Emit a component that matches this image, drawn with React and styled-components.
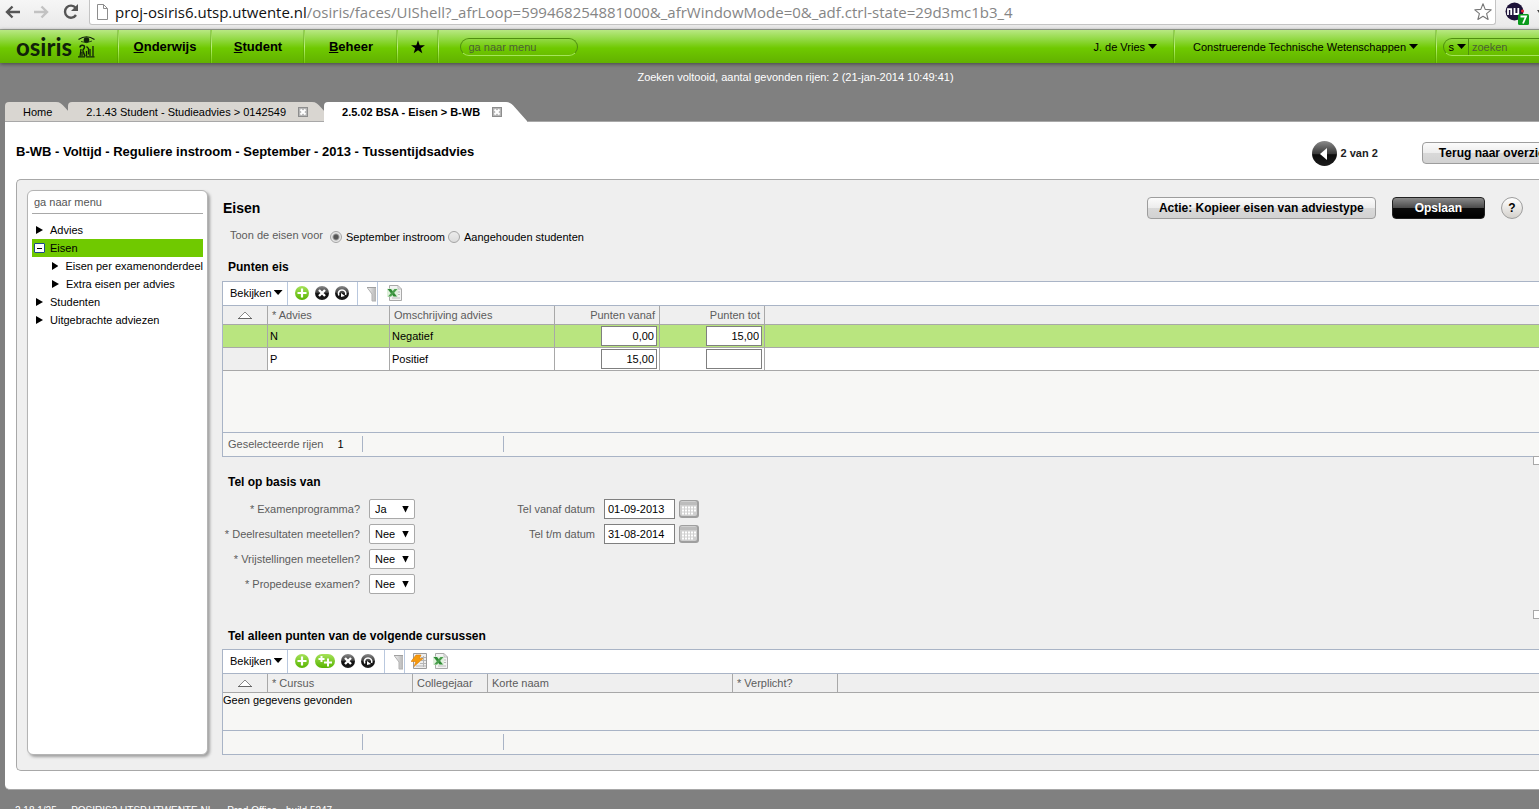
import React from "react";
import styled, { createGlobalStyle, css } from "styled-components";

const GlobalStyle = createGlobalStyle`
  *, *::before, *::after { box-sizing: border-box; }
  body {
    margin: 0;
    overflow: hidden;
    background: #808080;
    color: #000;
    font: 11px/18px "Liberation Sans", Arial, sans-serif;
  }
  button, input, select { font: inherit; color: inherit; }
  button { cursor: pointer; }
  h1, h2, h3, ul { margin: 0; padding: 0; }
`;

const line = "#a9b4c6";
const grey = "#a8a8a8";

/* ---------- browser bar ---------- */

const BrowserBar = styled.header`
  display: flex;
  align-items: flex-start;
  height: 30px;
  padding-left: 4px;
  background: linear-gradient(#f6f6f6, #e9e9e9);
  border-bottom: 1px solid #a2aa9c;
`;

const BrowserButton = styled.button`
  width: 29px;
  height: 24px;
  padding: 0;
  border: 0;
  background: none;
  text-align: left;
  svg { display: block; }
`;

const AddressBar = styled.div`
  display: flex;
  align-items: center;
  flex: 1;
  height: 25px;
  margin-left: -2px;
  margin-right: 9px;
  padding: 0 3px 0 7px;
  background: #fff;
  border: 1px solid #c4c4c4;
  border-top: 0;
  border-radius: 0 0 3px 3px;
`;

const Address = styled.div`
  flex: 1;
  padding-left: 7px;
  color: #858585;
  font: 15px/24px "Open Sans", "Noto Sans", sans-serif;
  white-space: nowrap;
  b { color: #111; font-weight: 400; }
`;

const Extension = styled.div`
  width: 34px;
  svg { display: block; }
`;

/* ---------- page and main navigation ---------- */

const Shell = styled.div`
  height: 100vh;
  overflow: hidden;
`;

const Page = styled.div`
  width: calc(100% + 52px);
`;

const NavBar = styled.nav`
  display: flex;
  height: 33px;
  background: linear-gradient(#b8e883 0, #8fd83f 30%, #6fc900 55%, #62b100 100%);
  box-shadow: 0 1px 4px #444;
`;

const Logo = styled.a`
  display: flex;
  align-items: center;
  gap: 6px;
  width: 118px;
  padding-left: 16px;
  color: #10220a;
  text-decoration: none;
  font: 700 24px/30px Lato, "Open Sans", sans-serif;
`;

const NavCell = styled.div`
  display: flex;
  align-items: center;
  justify-content: center;
  width: ${(p) => p.$width}px;
  border-left: 1px solid;
  border-image: linear-gradient(#8ccf45, #b9ee7c 50%, #6fc900) 1;
  box-shadow: -1px 0 0 rgba(60, 120, 0, 0.25);
`;

const NavLink = styled.a`
  color: #000;
  text-decoration: none;
  font-size: 13px;
  font-weight: 700;
  svg { display: block; }
`;

const NavDrop = styled.button`
  display: flex;
  align-items: center;
  gap: 3px;
  padding: 0;
  border: 0;
  background: none;
  white-space: nowrap;
`;

const UserMenu = styled.div`
  display: flex;
  margin-left: auto;
  padding-right: 17px;
`;

const Caret = styled.i`
  width: 9px;
  height: 5px;
  background: currentColor;
  clip-path: polygon(0 0, 100% 0, 50% 100%);
`;

const Pill = styled.div`
  display: flex;
  align-items: center;
  width: ${(p) => p.$width}px;
  height: 18px;
  overflow: hidden;
  border: 1px solid #4f8f10;
  border-bottom-color: #a5e45c;
  border-radius: 9px;
`;

const PillInput = styled.input`
  flex: 1;
  min-width: 0;
  height: 16px;
  padding: 0 ${(p) => p.$pad}px;
  border: 0;
  background: none;
  outline: 0;
  &::placeholder { color: #4c5f38; opacity: 1; }
`;

const PillDrop = styled.button`
  display: flex;
  align-items: center;
  gap: 3px;
  height: 16px;
  padding: 0 2px 0 5px;
  border: 0;
  border-right: 1px solid #4f8f10;
  background: none;
`;

const Message = styled.p`
  margin: 0;
  padding: 5px 0 0;
  height: 39px;
  color: #fff;
  text-align: center;
`;

/* ---------- tabs ---------- */

const TabRow = styled.ul`
  display: flex;
  position: relative;
  z-index: 1;
  margin: 0 0 -1px 5px;
  list-style: none;
`;

const TabItem = styled.li`
  display: flex;
  height: 20px;
  margin-right: -9px;
  color: ${(p) => (p.$active ? "#fff" : "#d9d6d1")};
  svg { display: block; }
`;

const TabBody = styled.div`
  display: flex;
  align-items: center;
  gap: 12px;
  padding: 0 4px 0 18px;
  border-radius: 4px 0 0 0;
  background: currentColor;
  ${(p) => !p.$active && css`box-shadow: inset 0 -1px ${grey};`}
  a { color: #000; text-decoration: none; font-weight: ${(p) => (p.$active ? 700 : 400)}; white-space: nowrap; }
`;

const CloseButton = styled.button`
  width: 10px;
  height: 10px;
  padding: 0;
  border: 0;
  background: none;
  svg { display: block; }
`;

/* ---------- content ---------- */

const Sheet = styled.main`
  margin-left: 5px;
  padding: 19px 0 18px 11px;
  background: #fff;
  border-top: 1px solid ${grey};
  border-bottom: 1px solid ${grey};
  border-radius: 0 0 0 5px;
`;

const SheetHead = styled.div`
  display: flex;
  align-items: center;
  height: 24px;
  margin-bottom: 14px;
  padding-right: 18px;
`;

const SheetTitle = styled.h1`
  flex: 1;
  padding-bottom: 2px;
  font-size: 13px;
  line-height: 20px;
`;

const Pager = styled.div`
  display: flex;
  align-items: center;
  gap: 4px;
  margin-right: 44px;
  font-weight: 700;
  color: #222;
`;

const PagerButton = styled.button`
  width: 25px;
  height: 25px;
  padding: 0;
  border: 0;
  background: none;
  svg { display: block; }
`;

const Button = styled.button`
  height: 22px;
  padding: 0 ${(p) => p.$pad || 11}px;
  border: 1px solid #9d9d9d;
  border-radius: 4px;
  background: linear-gradient(#fbfbfb, #ececec 50%, #d9d9d9 50%, #d2d2d2);
  font-size: 12px;
  font-weight: 700;
  white-space: nowrap;
  ${(p) =>
    p.$dark &&
    css`
      color: #fff;
      border-color: #222;
      background: linear-gradient(#8a8a8a, #4a4a4a 50%, #0a0a0a 50%, #000);
    `}
`;

const HelpButton = styled.button`
  width: 22px;
  height: 22px;
  padding: 0;
  border: 1px solid #9d9d9d;
  border-radius: 50%;
  background: linear-gradient(#fff, #d4d1cc);
  font-size: 12px;
  font-weight: 700;
`;

const Frame = styled.div`
  display: flex;
  align-items: stretch;
  gap: 14px;
  padding: 10px 0 15px 10px;
  background: #efefef;
  border: 1px solid ${grey};
  border-right: 0;
  border-radius: 5px 0 0 5px;
`;

const Side = styled.aside`
  flex: 0 0 181px;
  padding: 3px 4px;
  background: #fff;
  border: 1px solid #b4b4b4;
  border-radius: 6px;
  box-shadow: 2px 2px 3px #a0a0a0;
`;

const SideSearch = styled.input`
  display: block;
  width: 171px;
  height: 20px;
  margin-bottom: 7px;
  padding: 0 2px 4px;
  border: 0;
  border-bottom: 1px solid ${grey};
  background: none;
  outline: 0;
  &::placeholder { color: #555; opacity: 1; }
`;

const Tree = styled.ul`
  list-style: none;
`;

const TreeRow = styled.li`
  display: flex;
  align-items: center;
  gap: ${(p) => (p.$open ? 5 : 7)}px;
  height: 18px;
  width: 171px;
  padding-left: ${(p) => (p.$open ? 2 : p.$child ? 20 : 4)}px;
  background: ${(p) => (p.$open ? "#70c900" : "none")};
  white-space: nowrap;
  a { color: #000; text-decoration: none; }
`;

const TreeArrow = styled.i`
  width: 7px;
  height: 8px;
  background: #000;
  clip-path: polygon(0 0, 100% 50%, 0 100%);
`;

const TreeMinus = styled.i`
  display: flex;
  align-items: center;
  justify-content: center;
  width: 11px;
  height: 10px;
  background: #fff;
  border: 1px solid #1c4a8a;
  border-radius: 1px;
  &::after { content: ""; width: 5px; height: 1px; background: #000; }
`;

const Main = styled.section`
  display: flex;
  flex-direction: column;
  flex: 1;
  min-width: 0;
`;

const MainHead = styled.div`
  display: flex;
  align-items: center;
  gap: 16px;
  height: 36px;
  padding-right: 68px;
`;

const MainTitle = styled.h2`
  flex: 1;
  padding-left: 1px;
  font-size: 14px;
`;

const RadioRow = styled.fieldset`
  display: flex;
  align-items: center;
  gap: 3px;
  height: 28px;
  margin: 0 0 4px;
  padding: 0 0 0 8px;
  border: 0;
`;

const Muted = styled.span`
  color: #5c5c5c;
`;

const RadioCaption = styled(Muted)`
  margin-right: 4px;
  padding-bottom: 3px;
`;

const RadioLabel = styled.label`
  display: flex;
  align-items: center;
  gap: 4px;
`;

const Radio = styled.input`
  appearance: none;
  width: 12px;
  height: 12px;
  margin: 0;
  border: 1px solid #a5a5a5;
  border-radius: 50%;
  background: linear-gradient(#ececec, #dcdcdc);
  &:checked {
    background: radial-gradient(circle, #555 0 2px, #e6e6e6 4px);
  }
`;

const SectionTitle = styled.h3`
  height: 18px;
  padding-left: 6px;
  font-size: 12px;
  margin: ${(p) => p.$top || 0}px 0 ${(p) => p.$bottom || 0}px;
`;

const Handle = styled.div`
  align-self: flex-end;
  width: 10px;
  height: 9px;
  margin: -1px 48px 0 0;
  background: #fff;
  border: 1px solid ${grey};
`;

/* ---------- data panels ---------- */

const Panel = styled.div`
  background: #f7f7f5;
  border: 1px solid ${line};
  border-right: 0;
`;

const Toolbar = styled.div`
  display: flex;
  height: 24px;
  background: #fff;
  border-bottom: 1px solid ${line};
`;

const ToolGroup = styled.div`
  display: flex;
  align-items: center;
  gap: 6px;
  padding: 0 ${(p) => p.$right}px 2px ${(p) => (p.$last ? 9 : 7)}px;
  ${(p) => !p.$last && css`border-right: 1px solid #b9c8de;`}
`;

const ReportGroup = styled(ToolGroup)`
  padding-left: 6px;
`;

const FilterGroup = styled(ToolGroup)`
  padding: 1px 1px 0 9px;
`;

const ViewButton = styled.button`
  display: flex;
  align-items: center;
  gap: 2px;
  width: 65px;
  height: 23px;
  padding: 0 0 2px 7px;
  border: 0;
  border-right: 1px solid #b9c8de;
  background: none;
`;

const IconButton = styled.button`
  display: block;
  padding: 0;
  border: 0;
  background: none;
  svg { display: block; }
`;

const Grid = styled.table`
  width: 100%;
  table-layout: fixed;
  border-collapse: separate;
  border-spacing: 0;
`;

const Th = styled.th`
  width: ${(p) => (p.$width ? `${p.$width}px` : "auto")};
  height: 19px;
  padding: 0 ${(p) => (p.$center ? 0 : 4)}px;
  color: #5c5c5c;
  background: #efefef;
  border-bottom: 1px solid ${grey};
  border-right: ${(p) => (p.$width ? `1px solid ${grey}` : 0)};
  font-weight: 400;
  line-height: 18px;
  text-align: ${(p) => (p.$right ? "right" : p.$center ? "center" : "left")};
  svg { display: block; margin: 0 auto; }
`;

const Td = styled.td`
  height: 23px;
  padding: 0 2px;
  border-bottom: 1px solid ${grey};
  border-right: ${(p) => (p.$last ? 0 : `1px solid ${grey}`)};
  text-align: ${(p) => (p.$right ? "right" : "left")};
`;

const Tr = styled.tr`
  background: ${(p) => (p.$selected ? "#b9e57f" : "#fff")};
  td:first-child { background: ${(p) => (p.$selected ? "#b9e57f" : "#efefef")}; }
`;

const NumberInput = styled.input`
  display: block;
  width: 56px;
  height: 20px;
  margin-left: auto;
  padding: 0 2px;
  border: 1px solid #7f7f7f;
  border-radius: 0;
  background: #fff;
  text-align: right;
`;

const PanelBody = styled.div`
  height: ${(p) => p.$height}px;
  line-height: 15px;
`;

const StatusBar = styled.div`
  display: flex;
  align-items: center;
  height: 24px;
  padding-bottom: 1px;
  border-top: 1px solid ${line};
`;

const StatusCell = styled.div`
  display: flex;
  align-items: center;
  gap: 14px;
  width: ${(p) => p.$width}px;
  height: 16px;
  padding-left: 5px;
  border-right: 1px solid ${line};
`;

/* ---------- form ---------- */

const Form = styled.form`
  display: flex;
  gap: 82px;
  margin-bottom: 17px;
`;

const Fields = styled.div`
  display: grid;
  grid-template-columns: ${(p) => p.$label}px auto;
  grid-auto-rows: 20px;
  gap: 5px 9px;
  align-content: start;
`;

const FieldLabel = styled.label`
  color: #5c5c5c;
  line-height: 20px;
  text-align: right;
  white-space: nowrap;
`;

const SelectBox = styled.div`
  display: grid;
  align-items: center;
  width: 46px;
  > * { grid-area: 1 / 1; }
  &::after {
    content: "";
    grid-area: 1 / 1;
    justify-self: end;
    width: 7px;
    height: 7px;
    margin-right: 6px;
    background: #000;
    clip-path: polygon(0 0, 100% 0, 50% 100%);
    pointer-events: none;
  }
`;

const Select = styled.select`
  appearance: none;
  width: 46px;
  height: 20px;
  padding: 0 0 0 5px;
  border: 1px solid #a9a9a9;
  border-radius: 2px;
  background: #fff;
`;

const DateBox = styled.div`
  display: flex;
  align-items: center;
  gap: 4px;
`;

const DateInput = styled.input`
  width: 71px;
  height: 20px;
  padding: 0 3px;
  border: 1px solid #7f7f7f;
  border-radius: 0;
  background: #fff;
`;

const Footer = styled.footer`
  padding: 12px 0 0 15px;
  color: #fff;
  font-size: 10px;
  white-space: pre;
`;

/* ---------- icons ---------- */

const HiddenDefs = styled.svg`
  position: absolute;
  width: 0;
  height: 0;
`;

const Gradients = () => (
  <HiddenDefs aria-hidden="true">
    <defs>
      <linearGradient id="green" x1="0" y1="0" x2="0" y2="1">
        <stop offset="0" stopColor="#a6e25a" />
        <stop offset="1" stopColor="#58b400" />
      </linearGradient>
      <linearGradient id="black" x1="0" y1="0" x2="0" y2="1">
        <stop offset="0" stopColor="#8a8a8a" />
        <stop offset="0.5" stopColor="#3a3a3a" />
        <stop offset="0.55" stopColor="#0c0c0c" />
        <stop offset="1" stopColor="#1c1c1c" />
      </linearGradient>
      <linearGradient id="metal" x1="0" y1="0" x2="1" y2="0">
        <stop offset="0" stopColor="#f4f4f4" />
        <stop offset="1" stopColor="#b4b4b4" />
      </linearGradient>
    </defs>
  </HiddenDefs>
);

const BackIcon = () => (
  <svg width="18" height="24" viewBox="0 0 18 24" fill="none" stroke="#555" strokeWidth="2.4">
    <path d="M16 12H3M8.500 6.500 3 12l5.500 5.500" />
  </svg>
);

const ForwardIcon = () => (
  <svg width="18" height="24" viewBox="0 0 18 24" fill="none" stroke="#c2c2c2" strokeWidth="2.4">
    <path d="M1 12h13M8.500 6.500 14 12l-5.500 5.500" />
  </svg>
);

const ReloadIcon = () => (
  <svg width="18" height="24" viewBox="0 0 18 24">
    <path d="M13.600 7.800A6 6 0 1 0 14 15" fill="none" stroke="#555" strokeWidth="2.4" />
    <path d="M16 4v7H9z" fill="#555" />
  </svg>
);

const FileIcon = () => (
  <svg width="11" height="16" viewBox="0 0 11 16" fill="#fff" stroke="#8d8d8d">
    <path d="M.5.5h6l4 4v11H.500zM6.500.5v4h4" />
  </svg>
);

const StarOutline = () => (
  <svg width="18" height="18" viewBox="0 0 18 18" fill="#fff" stroke="#777" strokeWidth="1.100" strokeLinejoin="round">
    <path d="m9 .8 2.200 5.600 6 .4-4.600 3.800 1.500 5.900L9 13.200l-5.100 3.300 1.500-5.900L.8 6.800l6-.4z" />
  </svg>
);

const Badge = () => (
  <svg width="34" height="26" viewBox="0 0 34 26">
    <circle cx="9.500" cy="11.500" r="9" fill="#1d1238" />
    <path d="M3 15V9.200h3.200V15M9.500 8v6h3.800V8" fill="none" stroke="#fff" strokeWidth="1.800" />
    <circle cx="17.500" cy="11" r="1.500" fill="#e23" />
    <rect x="13" y="14" width="11" height="11" rx="1.500" fill="#0a9a1c" />
    <path d="M15.500 16.500h5.500l-3 7" fill="none" stroke="#fff" strokeWidth="1.800" />
    <path d="M32 10h4l-2 3z" fill="#444" />
  </svg>
);

const OsirisMark = () => (
  <svg width="17" height="22" viewBox="0 0 17 22" fill="none" stroke="#10220a">
    <path d="M.5 3.500Q8.500-2 16.500 3.500" strokeWidth="1.200" />
    <path d="M3 5.500Q8.500 8 14 5" strokeWidth=".8" />
    <circle cx="8.500" cy="4" r="2.800" fill="#10220a" stroke="none" />
    <path d="M2 11.500c0-3 4.500-3 4.500-.5 0 2-2 2-1.500 4l2 5.500" strokeWidth="1.500" />
    <path d="M3 13 2 20.500M4 16v4" strokeWidth="1.300" />
    <path d="M8.500 10.500l2 2v6M8.500 15v5" strokeWidth="1.300" />
    <path d="M12 13v7M15 10v10.500" strokeWidth="1.300" />
    <path d="M0 20.800h7M8 20.800h8.500" strokeWidth="1.300" />
  </svg>
);

const StarSolid = () => (
  <svg width="14" height="14" viewBox="0 0 14 14">
    <path d="m7 .3 1.700 4.900H14L9.800 8.300l1.500 5L7 10.300l-4.300 3 1.500-5L0 5.200h5.300z" />
  </svg>
);

const TabCap = ({ active }) => (
  <svg width="21" height="20" viewBox="0 0 21 20">
    <path d="M0 0C4 0 6 2 9 5.500L21 19v1H0z" fill="currentColor" />
    {!active && <path d="M0 19.500h21" stroke={grey} />}
  </svg>
);

const CloseIcon = () => (
  <svg width="10" height="10" viewBox="0 0 10 10">
    <rect x=".5" y=".5" width="9" height="9" fill="#b5b5b5" stroke="#8d8d8d" />
    <path d="m2.500 2.500 5 5m0-5-5 5" stroke="#fff" strokeWidth="2" />
  </svg>
);

const PagerIcon = () => (
  <svg width="25" height="25" viewBox="0 0 25 25">
    <circle cx="12.500" cy="12.500" r="12.500" fill="url(#black)" />
    <path d="M15 7v12l-7-6z" fill="#fff" />
  </svg>
);

const AddIcon = () => (
  <svg width="14" height="14" viewBox="0 0 14 14">
    <circle cx="7" cy="7" r="7" fill="url(#green)" />
    <path d="M7 2.500v9M2.500 7h9" stroke="#fff" strokeWidth="2.200" />
  </svg>
);

const AddManyIcon = () => (
  <svg width="20" height="14" viewBox="0 0 20 14">
    <rect width="20" height="14" rx="7" fill="url(#green)" />
    <path d="M6.500 2v6M3.500 5h6M13 4.500v8M9 8.500h8" stroke="#fff" strokeWidth="2" />
  </svg>
);

const DeleteIcon = () => (
  <svg width="14" height="14" viewBox="0 0 14 14">
    <circle cx="7" cy="7" r="7" fill="url(#black)" />
    <path d="m4 4 6 6m0-6-6 6" stroke="#fff" strokeWidth="2.400" />
  </svg>
);

const UndoIcon = () => (
  <svg width="14" height="14" viewBox="0 0 14 14">
    <circle cx="7" cy="7" r="7" fill="url(#black)" />
    <path d="M3.800 9.500C2.500 6 4.500 4 7 4s4.500 2 3.600 5" fill="none" stroke="#fff" strokeWidth="1.600" />
    <path d="M6 7v4l4-1z" fill="#fff" />
  </svg>
);

const FilterIcon = () => (
  <svg width="9" height="15" viewBox="0 0 9 15">
    <path d="M0 .5h9V14H5V7z" fill="url(#metal)" />
    <path d="M0 .5h9" stroke="#a0a0a0" />
    <path d="M.5 1 5 7v7h4" stroke="#b0b0b0" fill="none" />
  </svg>
);

const ExcelIcon = () => (
  <svg width="15" height="16" viewBox="0 0 15 16">
    <path d="M2.500.5H11L14.500 4v11.500h-12z" fill="#f3f3f3" stroke="#a9a9a9" />
    <path d="M11 .5V4h3.500M10 7h3M10 9.500h3M5 13h8" stroke="#bbb" fill="none" />
    <path d="M0 3.500h11v8.500H0z" fill="#dff0dc" />
    <path d="M.5 4h3.500l6 7.500H6.500z" fill="#2f8a35" />
    <path d="M10.500 4H7.500l-6.500 7.500h3z" fill="#4a9e4d" />
  </svg>
);

const FlashIcon = () => (
  <svg width="16" height="16" viewBox="0 0 16 16">
    <path d="M2.500.5h13v15h-13z" fill="#eee" stroke="#9b9b9b" />
    <path d="M10 4.500h5M10 7.500h5M9 10.500h6M5 13h10M12.500 3v11" stroke="#b5b5b5" />
    <path d="M5 2h5L8.500 5.500H12l-9 8 2-5H0z" fill="#f59a0c" stroke="#dd7a00" strokeWidth=".6" />
  </svg>
);

const SortIcon = () => (
  <svg width="14" height="8" viewBox="0 0 14 8" fill="#fff" stroke="#888">
    <path d="M1 7 7 1l6 6" />
    <path d="M0 7.500h14" stroke="#666" />
  </svg>
);

const CalendarIcon = () => (
  <svg width="20" height="18" viewBox="0 0 20 18">
    <rect width="20" height="18" rx="3" fill="#9f9f9f" />
    <rect x="1" y="1" width="17" height="15" rx="2" fill="#cfcfcf" />
    <path d="M1 3.500h17" stroke="#bcbcbc" strokeWidth="3" />
    <path d="M3 7.500h14M3 10.500h14M3 13.500h11" stroke="#fff" strokeWidth="2" strokeDasharray="2 1" />
  </svg>
);

/* ---------- composition ---------- */

const menu = ["Onderwijs", "Student", "Beheer"];

const tree = [
  { text: "Advies" },
  { text: "Eisen", open: true },
  { text: "Eisen per examenonderdeel", child: true },
  { text: "Extra eisen per advies", child: true },
  { text: "Studenten" },
  { text: "Uitgebrachte adviezen" },
];

const choices = [
  ["Examenprogramma?", "Ja"],
  ["Deelresultaten meetellen?", "Nee"],
  ["Vrijstellingen meetellen?", "Nee"],
  ["Propedeuse examen?", "Nee"],
];

const dates = [
  ["Tel vanaf datum", "01-09-2013"],
  ["Tel t/m datum", "31-08-2014"],
];

const rows = [
  { code: "N", name: "Negatief", from: "0,00", to: "15,00", selected: true },
  { code: "P", name: "Positief", from: "15,00", to: "" },
];

const Tool = ({ label, children }) => (
  <IconButton type="button" aria-label={label}>{children}</IconButton>
);

const Tab = ({ active, closable, children }) => (
  <TabItem $active={active}>
    <TabBody $active={active}>
      <a href="#tab">{children}</a>
      {closable && <CloseButton aria-label="Sluiten"><CloseIcon /></CloseButton>}
    </TabBody>
    <TabCap active={active} />
  </TabItem>
);

const PanelToolbar = ({ many }) => (
  <Toolbar>
    <ViewButton type="button">Bekijken<Caret /></ViewButton>
    <ToolGroup $right={many ? 9 : 8}>
      <Tool label="Toevoegen"><AddIcon /></Tool>
      {many && <Tool label="Meerdere toevoegen"><AddManyIcon /></Tool>}
      <Tool label="Verwijderen"><DeleteIcon /></Tool>
      <Tool label="Herstellen"><UndoIcon /></Tool>
    </ToolGroup>
    <FilterGroup><Tool label="Filter"><FilterIcon /></Tool></FilterGroup>
    {many ? (
      <ReportGroup $right={0} $last>
        <Tool label="Snel"><FlashIcon /></Tool>
        <Tool label="Excel"><ExcelIcon /></Tool>
      </ReportGroup>
    ) : (
      <ToolGroup $right={0} $last>
        <Tool label="Excel"><ExcelIcon /></Tool>
      </ToolGroup>
    )}
  </Toolbar>
);

export default function App() {
  return (
    <Shell>
      <GlobalStyle />
      <Gradients />

      <BrowserBar>
        <BrowserButton aria-label="Vorige"><BackIcon /></BrowserButton>
        <BrowserButton aria-label="Volgende"><ForwardIcon /></BrowserButton>
        <BrowserButton aria-label="Vernieuwen"><ReloadIcon /></BrowserButton>
        <AddressBar>
          <FileIcon />
          <Address>
            <b>proj-osiris6.utsp.utwente.nl</b>/osiris/faces/UIShell?_afrLoop=599468254881000&amp;_afrWindowMode=0&amp;_adf.ctrl-state=29d3mc1b3_4
          </Address>
          <StarOutline />
        </AddressBar>
        <Extension><Badge /></Extension>
      </BrowserBar>

      <Page>
        <NavBar>
          <Logo href="#home">osiris<OsirisMark /></Logo>
          {menu.map((m) => (
            <NavCell key={m} $width={93}>
              <NavLink href="#menu"><u>{m[0]}</u>{m.slice(1)}</NavLink>
            </NavCell>
          ))}
          <NavCell $width={41}>
            <NavLink href="#favorieten" aria-label="Favorieten"><StarSolid /></NavLink>
          </NavCell>
          <NavCell $width={160}>
            <Pill $width={118}><PillInput $pad={8} placeholder="ga naar menu" aria-label="ga naar menu" /></Pill>
          </NavCell>
          <UserMenu><NavDrop>J. de Vries<Caret /></NavDrop></UserMenu>
          <NavCell $width={262}>
            <NavDrop>Construerende Technische Wetenschappen<Caret /></NavDrop>
          </NavCell>
          <NavCell $width={155}>
            <Pill $width={143}>
              <PillDrop aria-label="Zoekgebied">s<Caret /></PillDrop>
              <PillInput $pad={3} placeholder="zoeken" aria-label="zoeken" />
            </Pill>
          </NavCell>
        </NavBar>

        <Message>Zoeken voltooid, aantal gevonden rijen: 2 (21-jan-2014 10:49:41)</Message>

        <TabRow>
          <Tab>Home</Tab>
          <Tab closable>2.1.43 Student - Studieadvies &gt; 0142549</Tab>
          <Tab closable active>2.5.02 BSA - Eisen &gt; B-WB</Tab>
        </TabRow>

        <Sheet>
          <SheetHead>
            <SheetTitle>B-WB - Voltijd - Reguliere instroom - September - 2013 - Tussentijdsadvies</SheetTitle>
            <Pager>
              <PagerButton aria-label="Vorige rij"><PagerIcon /></PagerButton>
              2 van 2
            </Pager>
            <Button $pad={16}>Terug naar overzicht</Button>
          </SheetHead>

          <Frame>
            <Side>
              <SideSearch placeholder="ga naar menu" aria-label="ga naar menu" />
              <Tree>
                {tree.map((t) => (
                  <TreeRow key={t.text} $open={t.open} $child={t.child}>
                    {t.open ? <TreeMinus /> : <TreeArrow />}
                    <a href="#item">{t.text}</a>
                  </TreeRow>
                ))}
              </Tree>
            </Side>

            <Main>
              <MainHead>
                <MainTitle>Eisen</MainTitle>
                <Button>Actie: Kopieer eisen van adviestype</Button>
                <Button $dark $pad={22}>Opslaan</Button>
                <HelpButton aria-label="Help">?</HelpButton>
              </MainHead>

              <RadioRow>
                <RadioCaption>Toon de eisen voor</RadioCaption>
                <RadioLabel><Radio type="radio" name="instroom" defaultChecked />September instroom</RadioLabel>
                <RadioLabel><Radio type="radio" name="instroom" />Aangehouden studenten</RadioLabel>
              </RadioRow>

              <SectionTitle $bottom={5}>Punten eis</SectionTitle>
              <Panel>
                <PanelToolbar />
                <Grid>
                  <thead>
                    <tr>
                      <Th $width={45} $center aria-label="Sorteren"><SortIcon /></Th>
                      <Th $width={122}>* Advies</Th>
                      <Th $width={165}>Omschrijving advies</Th>
                      <Th $width={105} $right>Punten vanaf</Th>
                      <Th $width={105} $right>Punten tot</Th>
                      <Th />
                    </tr>
                  </thead>
                  <tbody>
                    {rows.map((r) => (
                      <Tr key={r.code} $selected={r.selected}>
                        <Td />
                        <Td>{r.code}</Td>
                        <Td>{r.name}</Td>
                        <Td $right><NumberInput defaultValue={r.from} aria-label="Punten vanaf" /></Td>
                        <Td $right><NumberInput defaultValue={r.to} aria-label="Punten tot" /></Td>
                        <Td $last />
                      </Tr>
                    ))}
                  </tbody>
                </Grid>
                <PanelBody $height={61} />
                <StatusBar>
                  <StatusCell $width={140}><Muted>Geselecteerde rijen</Muted>1</StatusCell>
                  <StatusCell $width={141} />
                </StatusBar>
              </Panel>

              <Handle />
              <SectionTitle $top={8} $bottom={8}>Tel op basis van</SectionTitle>
              <Form>
                <Fields $label={138}>
                  {choices.map(([label, value], i) => (
                    <React.Fragment key={label}>
                      <FieldLabel htmlFor={`choice${i}`}>* {label}</FieldLabel>
                      <SelectBox>
                        <Select id={`choice${i}`} defaultValue={value}>
                          <option>Ja</option>
                          <option>Nee</option>
                        </Select>
                      </SelectBox>
                    </React.Fragment>
                  ))}
                </Fields>
                <Fields $label={98}>
                  {dates.map(([label, value], i) => (
                    <React.Fragment key={label}>
                      <FieldLabel htmlFor={`date${i}`}>{label}</FieldLabel>
                      <DateBox>
                        <DateInput id={`date${i}`} defaultValue={value} />
                        <Tool label="Kalender"><CalendarIcon /></Tool>
                      </DateBox>
                    </React.Fragment>
                  ))}
                </Fields>
              </Form>
              <Handle />

              <SectionTitle $top={8} $bottom={4}>Tel alleen punten van de volgende cursussen</SectionTitle>
              <Panel>
                <PanelToolbar many />
                <Grid>
                  <thead>
                    <tr>
                      <Th $width={45} $center aria-label="Sorteren"><SortIcon /></Th>
                      <Th $width={145}>* Cursus</Th>
                      <Th $width={75}>Collegejaar</Th>
                      <Th $width={245}>Korte naam</Th>
                      <Th $width={105}>* Verplicht?</Th>
                      <Th />
                    </tr>
                  </thead>
                </Grid>
                <PanelBody $height={37}>Geen gegevens gevonden</PanelBody>
                <StatusBar>
                  <StatusCell $width={140} />
                  <StatusCell $width={141} />
                </StatusBar>
              </Panel>
            </Main>
          </Frame>
        </Sheet>

        <Footer>2.18.1/25  -  POSIRIS2.UTSP.UTWENTE.NL  -  Prod Office - build 5247</Footer>
      </Page>
    </Shell>
  );
}
